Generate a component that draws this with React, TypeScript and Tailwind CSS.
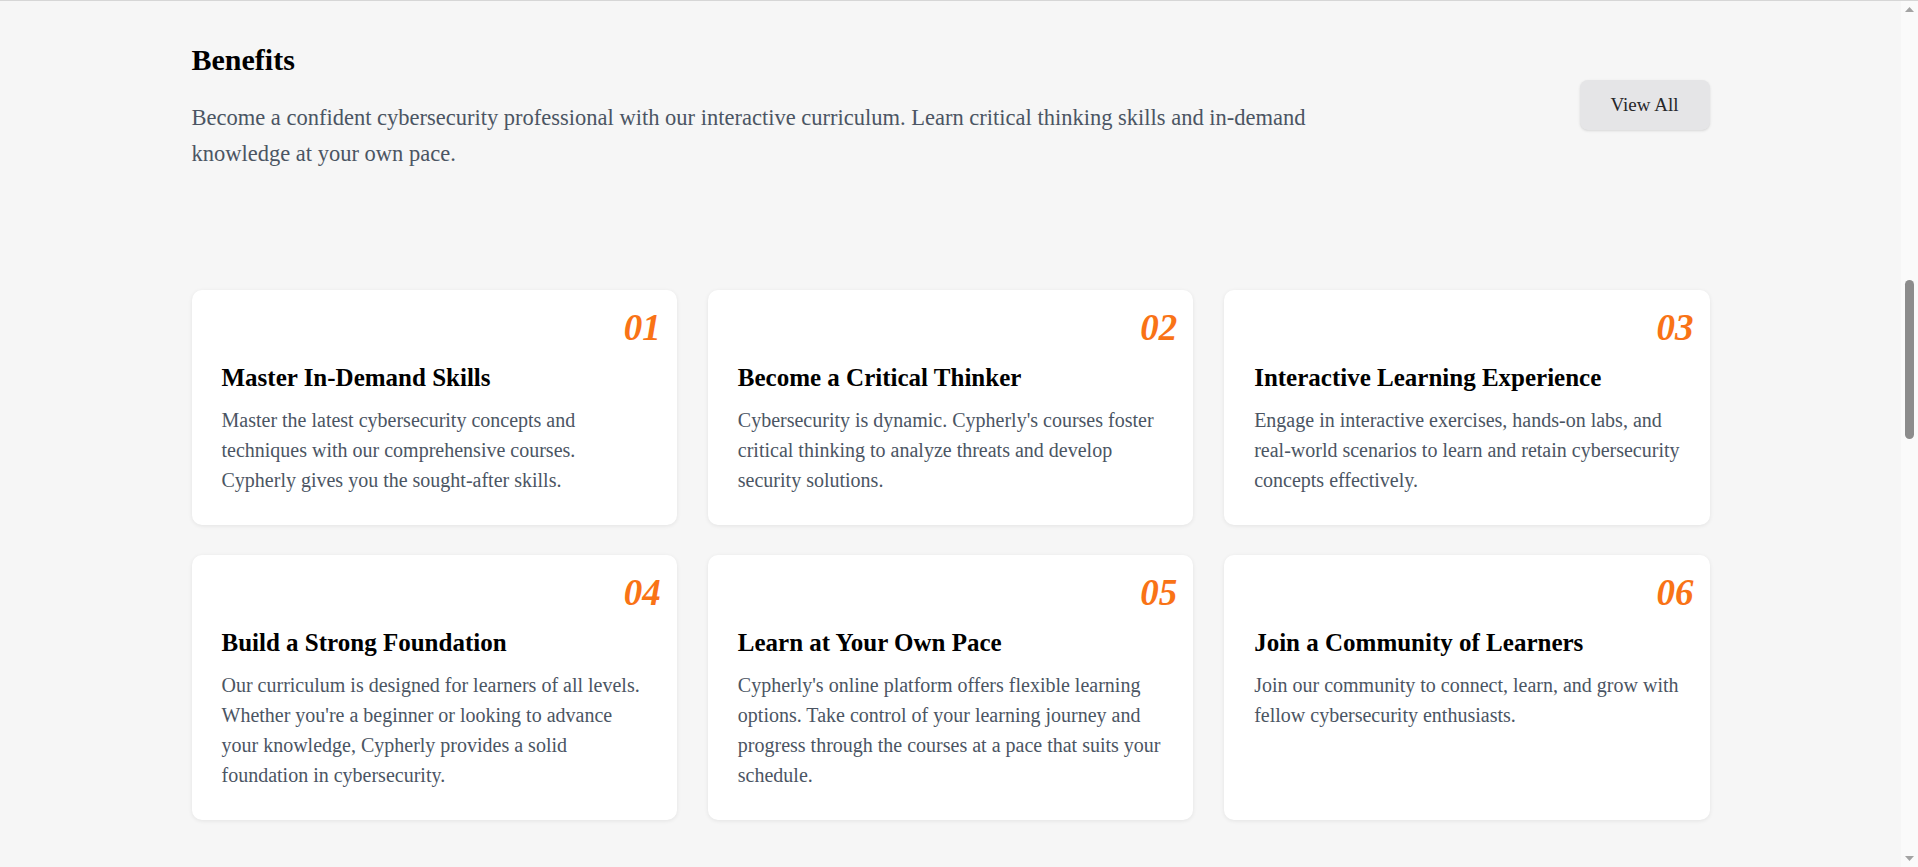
import React from 'react';

interface Benefit {
  num: string;
  title: string;
  text: string;
}

const benefits: Benefit[] = [
  {
    num: '01',
    title: 'Master In-Demand Skills',
    text: 'Master the latest cybersecurity concepts and techniques with our comprehensive courses. Cypherly gives you the sought-after skills.',
  },
  {
    num: '02',
    title: 'Become a Critical Thinker',
    text: "Cybersecurity is dynamic. Cypherly's courses foster critical thinking to analyze threats and develop security solutions.",
  },
  {
    num: '03',
    title: 'Interactive Learning Experience',
    text: 'Engage in interactive exercises, hands-on labs, and real-world scenarios to learn and retain cybersecurity concepts effectively.',
  },
  {
    num: '04',
    title: 'Build a Strong Foundation',
    text: "Our curriculum is designed for learners of all levels. Whether you're a beginner or looking to advance your knowledge, Cypherly provides a solid foundation in cybersecurity.",
  },
  {
    num: '05',
    title: 'Learn at Your Own Pace',
    text: "Cypherly's online platform offers flexible learning options. Take control of your learning journey and progress through the courses at a pace that suits your schedule.",
  },
  {
    num: '06',
    title: 'Join a Community of Learners',
    text: 'Join our community to connect, learn, and grow with fellow cybersecurity enthusiasts.',
  },
];

const BenefitCard: React.FC<{ item: Benefit }> = ({ item }) => (
  <div className="bg-white rounded-[10px] shadow-[0_1px_4px_rgba(0,0,0,0.08)] pt-5 pr-4 pb-[30px] pl-[30px]">
    <div className="flex justify-end">
      <span className="text-[37px] leading-[36px] font-bold italic text-[#f97316]">{item.num}</span>
    </div>
    <h3 className="mt-[17px] text-[25px] leading-[30px] font-bold text-black">{item.title}</h3>
    <p className="mt-[12px] pr-[8px] text-[20px] leading-[30px] text-[#4b5563]">{item.text}</p>
  </div>
);

const FakeScrollbar = () => (
  <aside className="w-[17px] flex flex-col bg-[#fafafa]">
    <div className="h-[17px] flex items-center justify-center">
      <svg width="9" height="5" viewBox="0 0 9 5">
        <path d="M0 5 L4.5 0 L9 5 Z" fill="#a3a3a3" />
      </svg>
    </div>
    <div className="flex-1 flex flex-col items-center pt-[262px]">
      <div className="w-[9px] h-[159px] rounded-full bg-[#8c8c8c]" />
    </div>
    <div className="h-[17px] flex items-center justify-center">
      <svg width="9" height="5" viewBox="0 0 9 5">
        <path d="M0 0 L9 0 L4.5 5 Z" fill="#a3a3a3" />
      </svg>
    </div>
  </aside>
);

export default function App() {
  return (
    <div className="h-screen flex overflow-hidden border-t border-[#d6d6d6] bg-[#f6f6f6] font-['Liberation_Serif',serif]">
      <main className="flex-1 pt-[41px]">
        <div className="w-[1518px] mx-auto">
          <div className="flex items-start justify-between">
            <div className="max-w-6xl">
              <h2 className="text-[30px] leading-[36px] font-bold text-black">Benefits</h2>
              <p className="mt-[22px] text-[22.5px] leading-[36px] text-[#4b5563]">
                Become a confident cybersecurity professional with our interactive curriculum. Learn critical thinking skills and in-demand knowledge at your own pace.
              </p>
            </div>
            <button className="mt-[38px] h-[50px] px-[31px] rounded-[8px] bg-[#e5e5e7] shadow-sm text-[19px] text-[#27272a]">
              View All
            </button>
          </div>

          <div className="mt-[118px] grid grid-cols-3 gap-x-[31px] gap-y-[30px]">
            {benefits.map((b) => (
              <BenefitCard key={b.num} item={b} />
            ))}
          </div>
        </div>
      </main>
      <FakeScrollbar />
    </div>
  );
}
